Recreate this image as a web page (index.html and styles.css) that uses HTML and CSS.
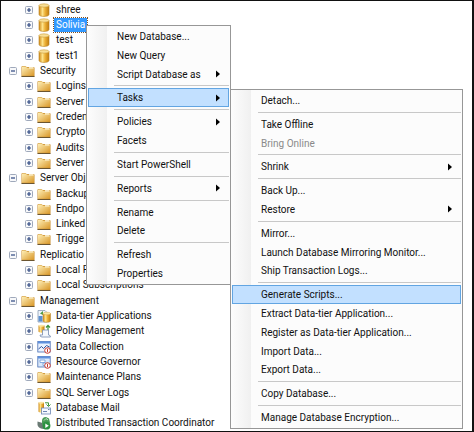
FILE: index.html
```html
<!DOCTYPE html>
<html lang="en">
<head>
<meta charset="UTF-8">
<meta name="viewport" content="width=device-width, initial-scale=1.0">
<title>Object Explorer</title>
<link rel="stylesheet" href="styles.css">
</head>
<body>

<svg class="defs" aria-hidden="true">
  <defs>
    <linearGradient id="gold" x1="0" x2="1" y1="0" y2="0">
      <stop offset="0" stop-color="#d08a18"/>
      <stop offset="0.35" stop-color="#fde38a"/>
      <stop offset="0.6" stop-color="#eeb238"/>
      <stop offset="1" stop-color="#c07c0e"/>
    </linearGradient>
    <linearGradient id="paper" x1="0" x2="1" y1="0" y2="1">
      <stop offset="0" stop-color="#fff0b8"/>
      <stop offset="1" stop-color="#d9982a"/>
    </linearGradient>
  </defs>
  <symbol id="plus" viewBox="0 0 8 8">
    <rect x="0.5" y="0.5" width="7" height="7" rx="1" fill="#f7f8fa" stroke="#9fa9bb"/>
    <path d="M2 4h4M4 2v4" stroke="#2c4680" stroke-width="1.2"/>
  </symbol>
  <symbol id="minus" viewBox="0 0 8 8">
    <rect x="0.5" y="0.5" width="7" height="7" rx="1" fill="#f7f8fa" stroke="#9fa9bb"/>
    <path d="M2 4h4" stroke="#2c4680" stroke-width="1.2"/>
  </symbol>
  <symbol id="db" viewBox="0 0 14 14">
    <path d="M2 2.500v9c0 2.600 10 2.600 10 0v-9z" fill="url(#gold)" stroke="#b98220" stroke-width="0.6"/>
    <ellipse cx="7" cy="2.500" rx="5" ry="1.700" fill="#f9df95" stroke="#c99a3a" stroke-width="0.6"/>
  </symbol>
  <symbol id="folder" viewBox="0 0 14 14">
    <path d="M0.500 12.500V3q0-1 1-1h3l1 1h7q1 0 1 1v8.500z" fill="#c98c2a"/>
    <path d="M1 11.800V3q0-.5.5-.5H5l1 1.200h6.500q.5 0 .5.5v7.600z" fill="url(#paper)"/>
    <path d="M8 3.200h4.500v1.300H8z" fill="#fff8dc"/>
    <path d="M0.500 12.500h13" stroke="#6b5530"/>
  </symbol>
  <symbol id="tier" viewBox="0 0 14 14">
    <path d="M1 1.500h7l2 2V13H1z" fill="#eef4fb" stroke="#8b9cb2" stroke-width="0.8"/>
    <path d="M1.500 7h4v5.500h-4z" fill="#5d91d0"/>
    <path d="M3 4.500l3-2.500v4z" fill="#4a9b45"/>
    <path d="M6 4.500v7.500c0 1.700 7.500 1.700 7.500 0V4.500z" fill="url(#gold)" stroke="#b8862c" stroke-width="0.5"/>
    <ellipse cx="9.750" cy="4.500" rx="3.750" ry="1.300" fill="#fbe6a4" stroke="#c99a3a" stroke-width="0.4"/>
  </symbol>
  <symbol id="policy" viewBox="0 0 14 14">
    <path d="M1.500 1.500v6c0 1.500 6 1.500 6 0v-6z" fill="url(#gold)"/>
    <ellipse cx="4.500" cy="1.800" rx="3" ry="1" fill="#fbe6a4"/>
    <path d="M11 6V2M9 3.500L11 1.300l2 2.200" fill="none" stroke="#3f943a" stroke-width="1.200"/>
    <path d="M5.500 6h6v5q2 0 2 2H5q-2 0-2-2h2.500z" fill="#f4f8fd" stroke="#7389ad" stroke-width="0.8"/>
  </symbol>
  <symbol id="collect" viewBox="0 0 14 14">
    <rect x="0.800" y="1.500" width="12.400" height="10.500" fill="#eaf3ff" stroke="#4a6fb4" stroke-width="0.8"/>
    <path d="M1 2.500h12" stroke="#5e91de" stroke-width="2"/>
    <path d="M1.500 9l3-2.500 2 2 3-3 3 1.500" fill="none" stroke="#31549b"/>
    <circle cx="10.500" cy="10.500" r="2.800" fill="#fff" stroke="#c73a30"/>
    <path d="M10.500 8.800v3.400" stroke="#c73a30"/>
  </symbol>
  <symbol id="governor" viewBox="0 0 14 14">
    <rect x="0.800" y="1.500" width="12.400" height="10.500" fill="#dbe9fb" stroke="#4a6fb4" stroke-width="0.8"/>
    <path d="M1 2.500h12" stroke="#5e91de" stroke-width="2"/>
    <path d="M3 5h5v2.500H3zM6 8h3v2.500H6z" fill="#fff" stroke="#6f9bd6" stroke-width="0.8"/>
    <circle cx="10.500" cy="10.500" r="2.800" fill="#fff" stroke="#c73a30"/>
    <path d="M10.500 8.800v3.400" stroke="#c73a30"/>
  </symbol>
  <symbol id="mail" viewBox="0 0 14 14">
    <path d="M1.500 1.500v9c0 1.500 5.500 1.500 5.500 0v-9z" fill="url(#gold)"/>
    <ellipse cx="4.250" cy="1.800" rx="2.750" ry="1" fill="#fbe6a4"/>
    <path d="M8 1.800h3.500v3M9.500 3.500l2 2 2-2" fill="none" stroke="#3f943a"/>
    <rect x="4.500" y="7" width="9" height="6" fill="#f6f9ff" stroke="#6d85b2" stroke-width="0.8"/>
    <path d="M6 10.500h4M11 8.500h1.500" stroke="#6d85b2"/>
  </symbol>
  <symbol id="dtc" viewBox="0 0 14 14">
    <path d="M0.500 5.500l5 1.500 2 6q-6 0-7-4z" fill="#6a7a74"/>
    <path d="M5 5q0-4 4-4l3 1.500 1 4-3 3-5-1z" fill="#4a9c57"/>
    <path d="M7 4.500l2-2 2 1.500" fill="none" stroke="#c2e4c4"/>
    <circle cx="9.500" cy="9.700" r="3.900" fill="#2b9240"/>
    <path d="M8.300 7.500l3.500 2.200-3.500 2.300z" fill="#fff"/>
  </symbol>
  <symbol id="arrow" viewBox="0 0 4 8">
    <path d="M0 0.500L4 4L0 7.500z" fill="#000"/>
  </symbol>
</svg>

<main class="explorer">
  <ul class="tree">
    <li class="node child"><svg class="toggle"><use href="#plus"/></svg><svg class="icon"><use href="#db"/></svg><span class="label">shree</span></li>
    <li class="node child"><svg class="toggle"><use href="#plus"/></svg><svg class="icon"><use href="#db"/></svg><span class="label selected">Solivia</span></li>
    <li class="node child"><svg class="toggle"><use href="#plus"/></svg><svg class="icon"><use href="#db"/></svg><span class="label">test</span></li>
    <li class="node child"><svg class="toggle"><use href="#plus"/></svg><svg class="icon"><use href="#db"/></svg><span class="label">test1</span></li>
    <li class="node"><svg class="toggle"><use href="#minus"/></svg><svg class="icon"><use href="#folder"/></svg><span class="label">Security</span></li>
    <li class="node child"><svg class="toggle"><use href="#plus"/></svg><svg class="icon"><use href="#folder"/></svg><span class="label">Logins</span></li>
    <li class="node child"><svg class="toggle"><use href="#plus"/></svg><svg class="icon"><use href="#folder"/></svg><span class="label">Server</span></li>
    <li class="node child"><svg class="toggle"><use href="#plus"/></svg><svg class="icon"><use href="#folder"/></svg><span class="label">Creden</span></li>
    <li class="node child"><svg class="toggle"><use href="#plus"/></svg><svg class="icon"><use href="#folder"/></svg><span class="label">Crypto</span></li>
    <li class="node child"><svg class="toggle"><use href="#plus"/></svg><svg class="icon"><use href="#folder"/></svg><span class="label">Audits</span></li>
    <li class="node child"><svg class="toggle"><use href="#plus"/></svg><svg class="icon"><use href="#folder"/></svg><span class="label">Server</span></li>
    <li class="node"><svg class="toggle"><use href="#minus"/></svg><svg class="icon"><use href="#folder"/></svg><span class="label">Server Obj</span></li>
    <li class="node child"><svg class="toggle"><use href="#plus"/></svg><svg class="icon"><use href="#folder"/></svg><span class="label">Backup</span></li>
    <li class="node child"><svg class="toggle"><use href="#plus"/></svg><svg class="icon"><use href="#folder"/></svg><span class="label">Endpo</span></li>
    <li class="node child"><svg class="toggle"><use href="#plus"/></svg><svg class="icon"><use href="#folder"/></svg><span class="label">Linked</span></li>
    <li class="node child"><svg class="toggle"><use href="#plus"/></svg><svg class="icon"><use href="#folder"/></svg><span class="label">Trigge</span></li>
    <li class="node"><svg class="toggle"><use href="#minus"/></svg><svg class="icon"><use href="#folder"/></svg><span class="label">Replicatio</span></li>
    <li class="node child"><svg class="toggle"><use href="#plus"/></svg><svg class="icon"><use href="#folder"/></svg><span class="label">Local P</span></li>
    <li class="node child"><svg class="toggle"><use href="#plus"/></svg><svg class="icon"><use href="#folder"/></svg><span class="label">Local Subscriptions</span></li>
    <li class="node"><svg class="toggle"><use href="#minus"/></svg><svg class="icon"><use href="#folder"/></svg><span class="label">Management</span></li>
    <li class="node child"><svg class="toggle"><use href="#plus"/></svg><svg class="icon"><use href="#tier"/></svg><span class="label">Data-tier Applications</span></li>
    <li class="node child"><svg class="toggle"><use href="#plus"/></svg><svg class="icon"><use href="#policy"/></svg><span class="label">Policy Management</span></li>
    <li class="node child"><svg class="toggle"><use href="#plus"/></svg><svg class="icon"><use href="#collect"/></svg><span class="label">Data Collection</span></li>
    <li class="node child"><svg class="toggle"><use href="#plus"/></svg><svg class="icon"><use href="#governor"/></svg><span class="label">Resource Governor</span></li>
    <li class="node child"><svg class="toggle"><use href="#plus"/></svg><svg class="icon"><use href="#folder"/></svg><span class="label">Maintenance Plans</span></li>
    <li class="node child"><svg class="toggle"><use href="#plus"/></svg><svg class="icon"><use href="#folder"/></svg><span class="label">SQL Server Logs</span></li>
    <li class="node child"><svg class="toggle"></svg><svg class="icon"><use href="#mail"/></svg><span class="label">Database Mail</span></li>
    <li class="node child"><svg class="toggle"></svg><svg class="icon"><use href="#dtc"/></svg><span class="label">Distributed Transaction Coordinator</span></li>
  </ul>

  <div class="menu context-menu">
    <button class="item">New Database...</button>
    <button class="item">New Query</button>
    <button class="item">Script Database as<svg class="arrow"><use href="#arrow"/></svg></button>
    <hr>
    <button class="item active">Tasks<svg class="arrow"><use href="#arrow"/></svg></button>
    <hr>
    <button class="item">Policies<svg class="arrow"><use href="#arrow"/></svg></button>
    <button class="item">Facets</button>
    <hr>
    <button class="item">Start PowerShell</button>
    <hr>
    <button class="item">Reports<svg class="arrow"><use href="#arrow"/></svg></button>
    <hr>
    <button class="item">Rename</button>
    <button class="item">Delete</button>
    <hr>
    <button class="item">Refresh</button>
    <button class="item">Properties</button>
  </div>

  <div class="menu tasks-menu">
    <button class="item">Detach...</button>
    <hr>
    <button class="item">Take Offline</button>
    <button class="item" disabled>Bring Online</button>
    <hr>
    <button class="item">Shrink<svg class="arrow"><use href="#arrow"/></svg></button>
    <hr>
    <button class="item">Back Up...</button>
    <button class="item">Restore<svg class="arrow"><use href="#arrow"/></svg></button>
    <hr>
    <button class="item">Mirror...</button>
    <button class="item">Launch Database Mirroring Monitor...</button>
    <button class="item">Ship Transaction Logs...</button>
    <hr>
    <button class="item active">Generate Scripts...</button>
    <button class="item">Extract Data-tier Application...</button>
    <button class="item">Register as Data-tier Application...</button>
    <button class="item">Import Data...</button>
    <button class="item">Export Data...</button>
    <hr>
    <button class="item">Copy Database...</button>
    <hr>
    <button class="item">Manage Database Encryption...</button>
  </div>
</main>

</body>
</html>
```
FILE: styles.css
```css
* {
  box-sizing: border-box;
}
body {
  margin: 0;
  font-family: Roboto, "Open Sans", sans-serif;
  font-size: 10px;
  color: #111;
  background: #fff;
}
.defs {
  position: absolute;
  width: 0;
  height: 0;
}
.explorer {
  position: relative;
  display: grid;
  min-height: 100vh;
  border: 1px solid #111;
  border-right-width: 2px;
  overflow: hidden;
}
.tree {
  display: grid;
  grid-auto-rows: minmax(15px, 1fr);
  margin: 0;
  padding: 1px 0 0 8px;
  list-style: none;
}
.node {
  display: flex;
  align-items: center;
  white-space: nowrap;
}
.child {
  padding-left: 16px;
}
.toggle {
  width: 8px;
  height: 8px;
  margin-right: 4px;
}
.icon {
  width: 14px;
  height: 14px;
}
.label {
  padding: 0 2px;
  margin-left: 3px;
  line-height: 14px;
}
.selected {
  color: #fff;
  background: #3399ff;
  outline: 1px dotted #805020;
}

/* menus */
.menu {
  position: absolute;
  display: flex;
  flex-direction: column;
  padding: 1px;
  border: 1px solid #979797;
  background: linear-gradient(to right, #fdfdfd, #f0f0f0 20px, #fcfcfc 20px);
}
.context-menu {
  top: 24px;
  bottom: 146px;
  left: 85px;
  width: 145px;
}
.tasks-menu {
  top: 88px;
  bottom: 2px;
  left: 229px;
  right: 9px;
}
.item {
  display: flex;
  flex: 1 0 18px;
  align-items: center;
  justify-content: space-between;
  padding: 0 8px 0 28px;
  border: 1px solid transparent;
  background: none;
  color: inherit;
  font: inherit;
  text-align: left;
  white-space: nowrap;
}
.item:disabled {
  color: #8a8a8a;
}
.active {
  background: #c2e0ff;
  border-color: #62a5e2;
}
.arrow {
  width: 4px;
  height: 8px;
}
hr {
  width: auto;
  height: 1px;
  margin: 2px 0 2px 26px;
  border: 0;
  background: #c8c8c8;
}
```
